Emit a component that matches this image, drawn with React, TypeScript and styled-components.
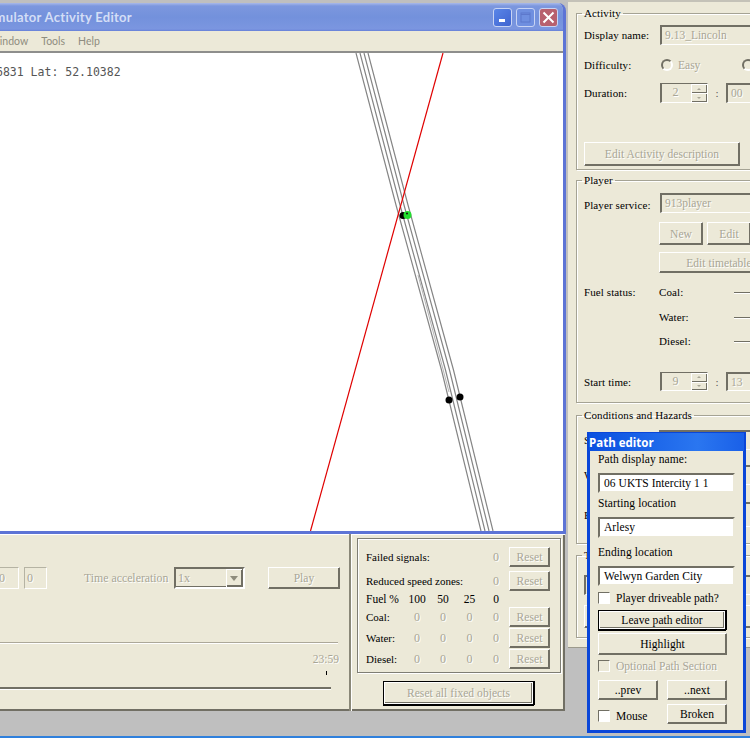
import React from 'react';
import styled, { createGlobalStyle, css } from 'styled-components';

const Global = createGlobalStyle`
  html, body { margin: 0; padding: 0; background: #c0c0c0; overflow: hidden; }
  #root { width: 750px; height: 738px; }
`;

const serif = `"Liberation Serif", "Times New Roman", serif`;
const face = '#ece9d8';
const dark = '#716f64';
const mute = '#a8a696';
const blue = '#5d74d6';

const Desktop = styled.div`
  position: relative; width: 750px; height: 738px; overflow: hidden;
  background: #bfbfbf; font: 11px ${serif}; color: #000;
  box-sizing: border-box;
`;
const Taskbar = styled.div`
  position: absolute; left: 0; right: 0; bottom: 0; height: 2px; background: #2f80dc;
`;
const MainWindow = styled.div`
  position: absolute; left: -250px; top: 3px; width: 816px; height: 708px;
  display: flex; flex-direction: column;
`;
const TopFrame = styled.div`
  height: 531px; display: flex; flex-direction: column; box-sizing: border-box;
  border: solid ${blue}; border-width: 0 3px 3px; border-radius: 8px 8px 0 0; overflow: hidden;
`;
const TitleBar = styled.div`
  height: 28px; flex: none; display: flex; align-items: center;
  background: linear-gradient(#a8b9ea 0, #7c97de 3px, #7391dc 14px, #7b96e0 26px, #6680d8 100%);
`;
const TitleText = styled.div`
  width: 379px; flex: none; display: flex; justify-content: flex-end; white-space: nowrap;
  font: bold 13px Lato, sans-serif; letter-spacing: .3px; color: #d4def6;
`;
const WinButtons = styled.div`
  margin-left: auto; margin-right: 5px; display: flex; gap: 4px;
`;
const WinButton = styled.div<{ $bg: string }>`
  width: 19px; height: 19px; box-sizing: border-box; border: 1px solid #c8d4f4; border-radius: 3px;
  background: ${p => p.$bg}; display: flex; align-items: center; justify-content: center;
`;
const MenuBar = styled.div`
  flex: none; background: ${face}; border-bottom: 2px solid #8e8e8c; box-sizing: content-box;
  padding: 0 0 1px 236px; display: flex; gap: 13px; align-items: center; height: 19px;
  font: 10.5px Lato, sans-serif; color: #8f8d80;
`;
const Canvas = styled.div`
  flex: 1; position: relative; background: #fff; overflow: hidden;
`;
const Coords = styled.div`
  position: relative; margin: 12px 0 0 243px; white-space: nowrap;
  font: 11.5px "DejaVu Sans Mono", monospace; color: #555; line-height: 14px;
`;
const TrackDrawing = styled.svg`
  position: absolute; inset: 0; width: 100%; height: 100%;
`;
const BottomPanel = styled.div`
  flex: 1; display: flex; background: ${face}; width: 815px;
  box-shadow: inset 0 1px 0 #fff, inset 0 -2px 0 ${dark}, inset -2px 0 0 ${dark};
`;
const Timeline = styled.div`
  width: 601px; flex: none; box-sizing: border-box; border-right: 2px solid #8a8878;
  padding: 33px 9px 0 0; display: flex; flex-direction: column; align-items: flex-end;
  box-shadow: 1px 0 0 #fff;
`;
const ControlRow = styled.div`
  display: flex; align-items: center; height: 22px;
`;
const TimeBox = styled.div<{ $gap: number }>`
  width: 23px; height: 22px; box-sizing: border-box; margin-left: ${p => p.$gap}px;
  border: 1px solid; border-color: #b5b3a3 #fff #fff #b5b3a3; font-size: 12px;
  color: ${mute}; padding-left: 2px; line-height: 20px; text-shadow: 1px 1px 0 #fff;
`;
const MutedLabel = styled.span`
  margin: 0 6px 0 37px; color: ${mute}; text-shadow: 1px 1px 0 #fff; font-size: 11.8px; width: 84px; white-space: nowrap;
`;
const Combo = styled.div`
  width: 71px; height: 22px; box-sizing: border-box; display: flex; justify-content: space-between;
  border: 2px solid; border-color: ${dark} #fff #fff ${dark}; font-size: 12px;
  color: ${mute}; padding-left: 2px; line-height: 19px; text-shadow: 1px 1px 0 #fff;
  box-shadow: inset -2px 0 0 ${dark}, inset 0 -1px 0 ${dark};
`;
const ComboArrow = styled.div`
  width: 16px; height: 18px; margin-right: 1px; box-sizing: border-box; background: ${face};
  display: flex; align-items: center; justify-content: center;
  box-shadow: inset 1px 1px 0 #fff, inset -1px -2px 0 ${dark};
  &::after { content: ''; border: 4px solid transparent; border-top: 5px solid #8e8c7c; border-bottom: 0; }
`;
const raised = css`
  box-sizing: border-box; background: ${face}; padding: 0; font: 11.5px ${serif};
  border: 1px solid; border-color: #fff ${dark} ${dark} #fff; box-shadow: inset 0 -1px 0 ${dark}, inset -1px 0 0 ${dark};
`;
const PushButton = styled.div<{ $w?: number; $h?: number; $gap?: number; $off?: boolean; $strong?: boolean }>`
  ${raised}
  flex: none; display: flex; align-items: center; justify-content: center; white-space: nowrap;
  width: ${p => (p.$w ? `${p.$w}px` : 'auto')}; height: ${p => p.$h ?? 22}px; margin-left: ${p => p.$gap ?? 0}px;
  color: ${p => (p.$off ? mute : '#000')};
  ${p => p.$off && 'text-shadow: 1px 1px 0 #fff;'}
  letter-spacing: .05px;
  ${p => p.$strong && 'border: 1px solid #000; box-shadow: inset 0 0 0 1px #fff, inset -1px -1px 0 1px #716f64, 0 1px 0 #000, 1px 0 0 #000;'}
`;
const Rule = styled.div`
  align-self: stretch; height: 1px; margin: 53px 2px 0 0; background: #aca899; box-shadow: 0 1px 0 #fff;
`;
const EndTime = styled.div`
  margin-top: 9px; height: 14px; line-height: 14px; color: ${mute}; font-size: 11.5px; text-shadow: 1px 1px 0 #fff; margin-right: 1px;
`;
const Tick = styled.div`
  width: 1px; height: 4px; background: #000; margin: 5px 13px 0 0;
`;
const Track = styled.div`
  align-self: stretch; height: 2px; margin: 12px 9px 0 0; background: ${dark}; box-shadow: 0 1px 0 #fff;
`;
const Hazards = styled.div`
  flex: 1; padding: 4px 0 0 6px; display: flex; flex-direction: column;
`;
const GroupBox = styled.div`
  width: 204px; height: 135px; box-sizing: border-box; padding: 8px 0 0 8px;
  border: 1px solid #7f7e74; box-shadow: 1px 1px 0 #fff, inset 1px 1px 0 #fff;
  display: grid; grid-template-columns: 38px 26px 26px 27px 26px 41px;
  grid-template-rows: 24px 21px 15px 21px 21px 21px;
`;
const GridLabel = styled.div<{ $span?: number }>`
  grid-column: span ${p => p.$span ?? 1}; line-height: 20px; height: 20px; white-space: nowrap; font-size: 11px;
`;
const GridHead = styled.div<{ $left?: boolean }>`
  text-align: ${p => (p.$left ? 'left' : 'center')}; line-height: 15px; white-space: nowrap; font-size: 11.5px;
`;
const GridSpacer = styled.div``;
const Zero = styled.div`
  text-align: center; line-height: 20px; height: 20px; color: ${mute}; text-shadow: 1px 1px 0 #fff; font-size: 12px;
`;
const CenterButton = styled.div`
  margin: 8px 0 0 26px;
`;
const RightWindow = styled.div`
  position: absolute; left: 568px; top: 0; width: 300px; height: 648px; box-sizing: border-box;
  background: ${face}; padding: 6px 0 0 8px;
  box-shadow: inset 0 2px 0 #c4c2b8;
  display: flex; flex-direction: column; gap: 3px; border-bottom: 1px solid #9c9a8c;
`;
const Group = styled.fieldset<{ $h: number; $gap?: number }>`
  margin: ${p => p.$gap ?? 0}px 0 0; padding: 0 0 0 7px; width: 280px; box-sizing: border-box; height: ${p => p.$h}px; min-width: 0;
  border: 1px solid #a5a394; box-shadow: 1px 1px 0 #fff, inset 1px 1px 0 #fff;
`;
const GroupTitle = styled.legend`
  padding: 0 2px; margin-left: -2px; line-height: 14px; white-space: nowrap; letter-spacing: .1px;
`;
const Row = styled.div<{ $top: number; $h: number; $indent?: number }>`
  display: flex; align-items: center; margin-top: ${p => p.$top}px; height: ${p => p.$h}px;
  padding-left: ${p => p.$indent ?? 0}px; white-space: nowrap;
`;
const FieldLabel = styled.div<{ $drop?: number }>`
  width: 75px; flex: none; letter-spacing: .1px; padding-top: ${p => p.$drop ?? 0}px;
`;
const Sunken = styled.div<{ $w: number; $off?: boolean; $gap?: number }>`
  width: ${p => p.$w}px; height: 100%; box-sizing: border-box; flex: none; margin-left: ${p => p.$gap ?? 0}px;
  border: 2px solid; border-color: ${dark} #fff #fff ${dark}; padding-left: 3px; line-height: 16px; font-size: 11.5px;
  color: ${p => (p.$off ? mute : '#000')}; ${p => p.$off && 'text-shadow: 1px 1px 0 #fff; border-width: 2px 1px 1px 2px;'}
  background: ${p => (p.$off ? face : '#fff')};
`;
const Radio = styled.div<{ $gap?: number }>`
  width: 12px; height: 12px; box-sizing: border-box; border-radius: 50%; flex: none;
  border: 2px solid; border-color: ${dark} #fff #fff ${dark}; margin-left: ${p => p.$gap ?? 2}px;
`;
const MutedText = styled.span<{ $gap?: number }>`
  color: ${mute}; text-shadow: 1px 1px 0 #fff; margin-left: ${p => p.$gap ?? 5}px; font-size: 11.5px; width: 22px;
`;
const Spin = styled.div`
  width: 48px; height: 100%; box-sizing: border-box; flex: none; display: flex; margin-left: 1px;
  border: 2px solid; border-width: 1px 1px 1px 2px; border-color: ${dark} #fff #fff ${dark};
  color: ${mute}; text-shadow: 1px 1px 0 #fff; line-height: 16px; font-size: 12px;
`;
const SpinValue = styled.div`
  flex: 1; text-align: center; padding-right: 2px;
`;
const SpinArrows = styled.div`
  width: 16px; display: flex; flex-direction: column;
`;
const SpinStep = styled.div<{ $down?: boolean }>`
  flex: 1; box-shadow: inset 1px 1px 0 #fff, inset -1px -1px 0 ${dark}; display: flex; align-items: center; justify-content: center;
  &::after { content: ''; border: 2px solid transparent;
    ${p => (p.$down ? `border-top: 2px solid ${mute}; border-bottom: 0;` : `border-bottom: 2px solid ${mute}; border-top: 0;`)} }
`;
const Colon = styled.span`
  width: 18px; flex: none; text-align: center; color: #555;
`;
const SliderLine = styled.div`
  width: 60px; height: 1px; background: ${dark}; box-shadow: 0 1px 0 #fff; flex: none;
`;
const PathWindow = styled.div`
  position: absolute; left: 587px; top: 432px; width: 159px; height: 301px; box-sizing: border-box;
  border: solid #0a46d8; border-width: 1px 3px 3px; background: ${face}; display: flex; flex-direction: column;
  font-size: 11.5px;
`;
const PathTitle = styled.div`
  height: 18px; flex: none; margin: 0 -1px; background: linear-gradient(90deg, #0a50e0, #2a76f0 70%, #1a60e8);
  color: #fff; font: bold 11.5px "Open Sans", sans-serif; line-height: 20px; padding-left: 0;
`;
const PathBody = styled.div`
  padding: 0 0 0 8px; display: flex; flex-direction: column;
`;
const PathLabel = styled.div<{ $top: number }>`
  margin-top: ${p => p.$top}px; height: 14px; line-height: 14px; letter-spacing: .1px; white-space: nowrap;
`;
const PathInput = styled.div<{ $top: number; $h: number }>`
  margin-top: ${p => p.$top}px; width: 137px; height: ${p => p.$h}px; box-sizing: border-box; background: #fff;
  border: 2px solid; border-color: ${dark} ${face} ${face} ${dark}; padding-left: 4px; line-height: 17px; letter-spacing: .05px; white-space: nowrap;
`;
const CheckRow = styled.div<{ $top: number; $off?: boolean }>`
  margin-top: ${p => p.$top}px; height: 12px; display: flex; align-items: center; gap: 6px; white-space: nowrap;
  color: ${p => (p.$off ? mute : '#000')}; ${p => p.$off && 'text-shadow: 1px 1px 0 #fff;'}
`;
const Check = styled.div<{ $off?: boolean }>`
  width: 12px; height: 12px; box-sizing: border-box; flex: none;
  border: 1px solid; border-color: ${dark} #fff #fff ${dark}; background: ${p => (p.$off ? face : '#fff')};
`;
const PathButton = styled(PushButton)<{ $top: number }>`
  margin-top: ${p => p.$top}px;
`;
const PairRow = styled.div<{ $top: number }>`
  margin-top: ${p => p.$top}px; display: flex; gap: 9px; width: 129px;
`;
const MouseCell = styled.div`
  width: 60px; flex: none; display: flex; flex-direction: column;
`;

const TRACKS = [0, 4, 8, 12];
const pts = (d: number) => `${356 + d},53 ${396 + d},205 ${441.5 + d},370 ${481 + d},531`;

export default function App() {
  return (
    <Desktop>
      <Global />
      <MainWindow>
        <TopFrame>
          <TitleBar>
            <TitleText>Simulator Activity Editor</TitleText>
            <WinButtons>
              <WinButton $bg="linear-gradient(135deg,#5a86e8,#3f64d0)">
                <svg width="9" height="9" viewBox="0 0 9 9"><rect x="1" y="6" width="6" height="3" fill="#fff" /></svg>
              </WinButton>
              <WinButton $bg="#6f8fe0">
                <svg width="11" height="11" viewBox="0 0 11 11" fill="none" stroke="#5d78cc"><rect x="1" y="1" width="9" height="9" /><path d="M1 2.5h9" /></svg>
              </WinButton>
              <WinButton $bg="#b8606e">
                <svg width="13" height="13" viewBox="0 0 13 13" stroke="#fff" strokeWidth="2"><path d="M1.5 1.5l10 10M11.5 1.5l-10 10" /></svg>
              </WinButton>
            </WinButtons>
          </TitleBar>
          <MenuBar>
            <span>Window</span>
            <span>Tools</span>
            <span>Help</span>
          </MenuBar>
          <Canvas>
            <TrackDrawing viewBox="-247 53 810 478">
              {TRACKS.map(d => (
                <polyline key={d} points={pts(d)} fill="none" stroke="#858585" strokeWidth="1.2" />
              ))}
              <polyline points="418,275 434,335 449,392" fill="none" stroke="#b5b5b5" strokeWidth="1" />
              <line x1="443" y1="53" x2="310.5" y2="531" stroke="#e00000" strokeWidth="1.2" />
              <circle cx="403" cy="215.5" r="3.5" fill="#000" />
              <circle cx="407.5" cy="215" r="4" fill="#22e02e" />
              <circle cx="407" cy="213.5" r="1" fill="#111" />
              <circle cx="449" cy="400" r="3.5" fill="#000" />
              <circle cx="460" cy="397" r="3.5" fill="#000" />
            </TrackDrawing>
            <Coords>6831 Lat: 52.10382</Coords>
          </Canvas>
        </TopFrame>
        <BottomPanel>
          <Timeline>
            <ControlRow>
              <TimeBox $gap={0}>0</TimeBox>
              <TimeBox $gap={5}>0</TimeBox>
              <MutedLabel>Time acceleration</MutedLabel>
              <Combo>
                1x
                <ComboArrow />
              </Combo>
              <PushButton $w={72} $gap={23} $off>Play</PushButton>
            </ControlRow>
            <Rule />
            <EndTime>23:59</EndTime>
            <Tick />
            <Track />
          </Timeline>
          <Hazards>
            <GroupBox>
              <GridLabel $span={4}>Failed signals:</GridLabel>
              <Zero>0</Zero>
              <PushButton $h={20} $off>Reset</PushButton>
              <GridLabel $span={4}>Reduced speed zones:</GridLabel>
              <Zero>0</Zero>
              <PushButton $h={20} $off>Reset</PushButton>
              <GridHead $left>Fuel %</GridHead>
              <GridHead>100</GridHead>
              <GridHead>50</GridHead>
              <GridHead>25</GridHead>
              <GridHead>0</GridHead>
              <GridSpacer />
              {['Coal:', 'Water:', 'Diesel:'].map(name => (
                <React.Fragment key={name}>
                  <GridLabel>{name}</GridLabel>
                  <Zero>0</Zero>
                  <Zero>0</Zero>
                  <Zero>0</Zero>
                  <Zero>0</Zero>
                  <PushButton $h={20} $off>Reset</PushButton>
                </React.Fragment>
              ))}
            </GroupBox>
            <CenterButton>
              <PushButton $w={151} $h={24} $off $strong>Reset all fixed objects</PushButton>
            </CenterButton>
          </Hazards>
        </BottomPanel>
      </MainWindow>

      <RightWindow>
        <Group $h={164}>
          <GroupTitle>Activity</GroupTitle>
          <Row $top={5} $h={20}>
            <FieldLabel>Display name:</FieldLabel>
            <Sunken $w={110} $gap={1} $off>9.13_Lincoln</Sunken>
          </Row>
          <Row $top={10} $h={20}>
            <FieldLabel>Difficulty:</FieldLabel>
            <Radio />
            <MutedText>Easy</MutedText>
            <Radio $gap={42} />
          </Row>
          <Row $top={8} $h={20}>
            <FieldLabel>Duration:</FieldLabel>
            <Spin>
              <SpinValue>2</SpinValue>
              <SpinArrows><SpinStep /><SpinStep $down /></SpinArrows>
            </Spin>
            <Colon>:</Colon>
            <Sunken $w={48} $off>00</Sunken>
          </Row>
          <Row $top={39} $h={24}>
            <PushButton $w={156} $h={24} $off>Edit Activity description</PushButton>
          </Row>
        </Group>
        <Group $h={230}>
          <GroupTitle>Player</GroupTitle>
          <Row $top={6} $h={20}>
            <FieldLabel $drop={4}>Player service:</FieldLabel>
            <Sunken $w={110} $gap={1} $off>913player</Sunken>
          </Row>
          <Row $top={9} $h={23} $indent={75}>
            <PushButton $w={44} $h={23} $off>New</PushButton>
            <PushButton $w={44} $h={23} $gap={4} $off>Edit</PushButton>
          </Row>
          <Row $top={7} $h={21} $indent={75}>
            <PushButton $w={120} $h={21} $off>Edit timetable</PushButton>
          </Row>
          <Row $top={9} $h={20}>
            <FieldLabel>Fuel status:</FieldLabel>
            <FieldLabel>Coal:</FieldLabel>
            <SliderLine />
          </Row>
          <Row $top={5} $h={20} $indent={75}>
            <FieldLabel>Water:</FieldLabel>
            <SliderLine />
          </Row>
          <Row $top={4} $h={20} $indent={75}>
            <FieldLabel>Diesel:</FieldLabel>
            <SliderLine />
          </Row>
          <Row $top={21} $h={19}>
            <FieldLabel>Start time:</FieldLabel>
            <Spin>
              <SpinValue>9</SpinValue>
              <SpinArrows><SpinStep /><SpinStep $down /></SpinArrows>
            </Spin>
            <Colon>:</Colon>
            <Sunken $w={48} $off>13</Sunken>
          </Row>
        </Group>
        <Group $h={136} $gap={2}>
          <GroupTitle>Conditions and Hazards</GroupTitle>
          <Row $top={8} $h={20}>
            <FieldLabel>Season:</FieldLabel>
            <Sunken $w={120} $off />
          </Row>
          <Row $top={15} $h={20}>
            <FieldLabel>Weather:</FieldLabel>
            <Sunken $w={120} $off />
          </Row>
          <Row $top={17} $h={25}>
            <FieldLabel>Effects:</FieldLabel>
            <Sunken $w={120} $off />
          </Row>
        </Group>
        <Group $h={90} $gap={1}>
          <GroupTitle>Traffic</GroupTitle>
          <Row $top={13} $h={20}>
            <Sunken $w={170} $off />
          </Row>
          <Row $top={10} $h={23}>
            <PushButton $w={170} $h={23} $off />
          </Row>
        </Group>
      </RightWindow>

      <PathWindow>
        <PathTitle>Path editor</PathTitle>
        <PathBody>
          <PathLabel $top={1}>Path display name:</PathLabel>
          <PathInput $top={7} $h={20}>06 UKTS Intercity 1 1</PathInput>
          <PathLabel $top={3}>Starting location</PathLabel>
          <PathInput $top={7} $h={21}>Arlesy</PathInput>
          <PathLabel $top={7}>Ending location</PathLabel>
          <PathInput $top={7} $h={20}>Welwyn Garden City</PathInput>
          <CheckRow $top={6}><Check />Player driveable path?</CheckRow>
          <PathButton $top={6} $w={128} $h={20} $strong>Leave path editor</PathButton>
          <PathButton $top={3} $w={129} $h={22}>Highlight</PathButton>
          <CheckRow $top={5} $off><Check $off />Optional Path Section</CheckRow>
          <PairRow $top={8}>
            <PushButton $w={60} $h={20}>..prev</PushButton>
            <PushButton $w={60} $h={20}>..next</PushButton>
          </PairRow>
          <PairRow $top={4}>
            <MouseCell>
              <CheckRow $top={6}><Check />Mouse</CheckRow>
            </MouseCell>
            <PushButton $w={60} $h={20}>Broken</PushButton>
          </PairRow>
        </PathBody>
      </PathWindow>
      <Taskbar />
    </Desktop>
  );
}
